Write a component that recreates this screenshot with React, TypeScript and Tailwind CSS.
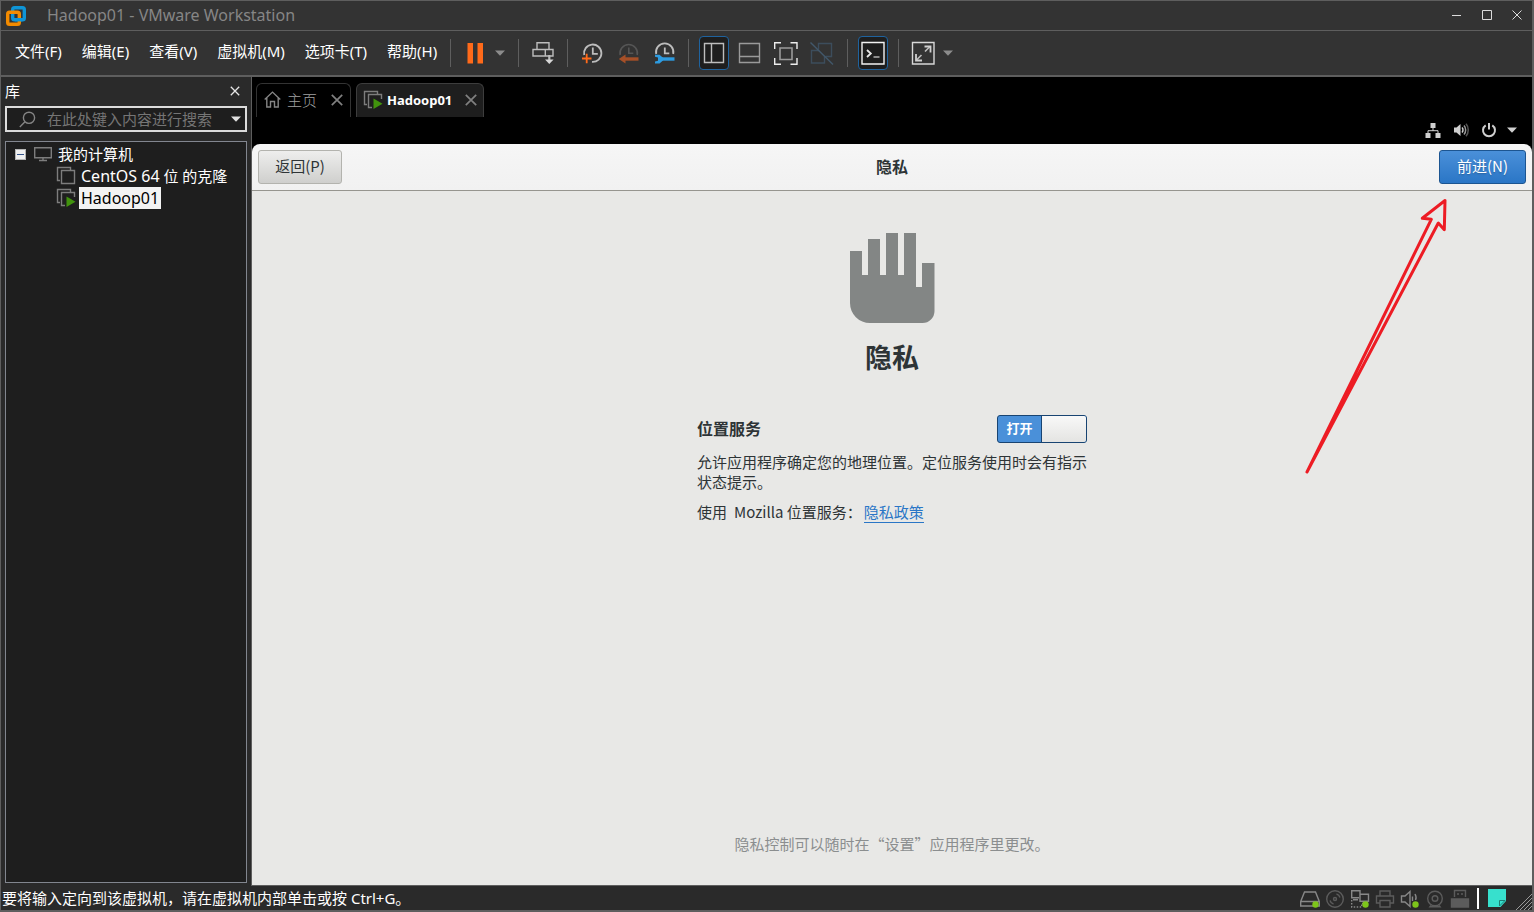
import { useState } from 'react';
import type { ReactNode } from 'react';

const menus = ['文件(F)', '编辑(E)', '查看(V)', '虚拟机(M)', '选项卡(T)', '帮助(H)'];

const uiFont = "font-['Noto_Sans','Noto_Sans_CJK_SC',sans-serif]";
const guestFont = "font-['Noto_Sans_CJK_SC',sans-serif]";

function Icon({ children, size = 24 }: { children: ReactNode; size?: number }) {
  return (
    <svg width={size} height={size} viewBox={`0 0 ${size} ${size}`} fill="none" stroke="#bdbdbd" strokeWidth="1.4" className="shrink-0" aria-hidden="true">
      {children}
    </svg>
  );
}

function Caret({ color = '#8c8c8c' }: { color?: string }) {
  return (
    <svg width="12" height="12" viewBox="0 0 12 12" className="shrink-0" aria-hidden="true">
      <path d="M1 3.5h10L6 8.8z" fill={color} />
    </svg>
  );
}

function Separator() {
  return <div className="h-7 w-px shrink-0 bg-[#5e5e5e]" />;
}

function ToolButton({ label, active, disabled, children }: { label: string; active?: boolean; disabled?: boolean; children: ReactNode }) {
  return (
    <button
      aria-label={label}
      disabled={disabled}
      className={
        active
          ? 'flex h-[34px] w-[30px] items-center justify-center rounded-sm border border-[#1f639f] bg-[#1e1e1e]'
          : 'flex h-[34px] w-[30px] items-center justify-center'
      }
    >
      {children}
    </button>
  );
}

function Logo() {
  return (
    <svg width="20" height="20" viewBox="0 0 20 20" fill="none" strokeWidth="3.4" aria-hidden="true">
      <rect x="6.7" y="1.7" width="11.6" height="12" rx="1.8" stroke="#0f95d7" />
      <rect x="1.7" y="6.3" width="11.6" height="12" rx="1.8" stroke="#f38b00" />
      <path d="M9 13.7h7.3" stroke="#0f95d7" />
    </svg>
  );
}

function TitleBar() {
  return (
    <header className="flex h-[30px] shrink-0 items-center border-b border-[#5e5e5e] bg-[#333] pl-[5px]">
      <Logo />
      <h1 className="ml-[21px] flex-1 pb-[2px] text-base leading-none text-[#868686]">Hadoop01 - VMware Workstation</h1>
      <div className="flex pb-[2px]">
        <button aria-label="最小化" className="flex h-7 w-[30px] items-center justify-center">
          <svg width="10" height="10" stroke="#dcdcdc"><path d="M0 5.5h9" /></svg>
        </button>
        <button aria-label="最大化" className="flex h-7 w-[30px] items-center justify-center">
          <svg width="10" height="10" stroke="#dcdcdc" fill="none"><path d="M.5.5h9v9h-9z" /></svg>
        </button>
        <button aria-label="关闭" className="flex h-7 w-[30px] items-center justify-center">
          <svg width="10" height="10" stroke="#dcdcdc"><path d="M.5.5l9 9M9.5.5l-9 9" /></svg>
        </button>
      </div>
    </header>
  );
}

function MenuBar() {
  return (
    <div className="flex h-[46px] shrink-0 items-center border-b-2 border-[#5e5e5e] bg-[#333]">
      <nav className="mr-[13px] ml-[14px] flex gap-5 pb-1">
        {menus.map((m) => (
          <button key={m} className="text-[15px] leading-5 whitespace-nowrap text-white">
            {m}
          </button>
        ))}
      </nav>
      <Separator />
      <div className="flex items-center gap-[7px] px-3">
        <button aria-label="挂起">
          <Icon>
            <path d="M4.5 2h5.500v20.500H4.500zM14.500 2H20v20.500h-5.500z" fill="#ff6a1a" stroke="none" />
          </Icon>
        </button>
        <button aria-label="电源选项"><Caret /></button>
      </div>
      <Separator />
      <div className="flex items-center px-3">
        <button aria-label="发送 Ctrl+Alt+Del">
          <Icon>
            <path d="M6 1.700h12v6.800H6zM2 8.500h20V15H2zM14.300 8.500V15" />
            <path d="M18.300 14v6" strokeWidth="2.200" />
            <path d="M14 18.500h8.600l-4.300 4.500z" fill="#d8d8d8" stroke="none" />
          </Icon>
        </button>
      </div>
      <Separator />
      <div className="flex items-center gap-3 px-3">
        <button aria-label="拍摄快照">
          <Icon>
            <path d="M4.200 14A8.700 8.700 0 1 1 12 20.900" strokeWidth="1.800" />
            <path d="M12.800 6.500v6.300h5" strokeWidth="1.800" />
            <path d="M2 17.500h9.500M6.700 12.800v9.500" stroke="#ff6a1a" strokeWidth="1.800" />
          </Icon>
        </button>
        <button aria-label="恢复快照" disabled>
          <Icon>
            <path d="M4.200 14a8.700 8.700 0 1 1 17 0M12.800 6.500v5.800h4.500" stroke="#555" strokeWidth="1.600" />
            <path d="M9 18h13.500" stroke="#a54f27" strokeWidth="3.400" />
            <path d="M2.800 18l6.700-4.500v9z" fill="#a54f27" stroke="none" />
          </Icon>
        </button>
        <button aria-label="管理快照">
          <Icon>
            <path d="M4.200 13a8.700 8.700 0 1 1 17 0M12.800 6.500v5.800h4.500" strokeWidth="1.800" />
            <path d="M9 18h13.500" stroke="#2d9be0" strokeWidth="3.400" />
            <path d="M3 13.800h4.500l3.500 3v2.800l-3.500 3H3v-2l3-.8v-3.200l-3-.8z" fill="#2d9be0" stroke="none" />
          </Icon>
        </button>
      </div>
      <Separator />
      <div className="flex items-center gap-[6px] px-[10px]">
        <ToolButton label="显示库" active>
          <Icon><path d="M2.500 2.500h19v19h-19zM9.500 2.500v19" /></Icon>
        </ToolButton>
        <ToolButton label="显示缩略图">
          <Icon><path d="M1.500 2.500h20v19h-20zM1.500 15.500h20" stroke="#9a9a9a" /></Icon>
        </ToolButton>
        <ToolButton label="全屏">
          <Icon>
            <path d="M.700 8V1.700H7M16.500 1.700H23V8M23 17v6.300h-6.500M7 23.300H.700V17" stroke="#ededed" />
            <path d="M6 7h12v11.500H6z" stroke="#9a9a9a" strokeWidth="1.600" />
          </Icon>
        </ToolButton>
        <ToolButton label="Unity" disabled>
          <Icon>
            <path d="M8.500 8.500v-6h13v13h-6M14.500 15v7h-13V9.500H9" stroke="#3c4d5c" />
            <path d="M.500 1.500l22.500 22" stroke="#42586b" />
          </Icon>
        </ToolButton>
      </div>
      <Separator />
      <div className="flex items-center px-[10px]">
        <ToolButton label="控制台视图" active>
          <Icon>
            <path d="M1 1.500h22v21.500H1z" stroke="#f2f2f2" />
            <path d="M6 9l3.800 3.500L6 16" stroke="#e8e8e8" strokeWidth="1.800" />
            <path d="M12.500 16h6" stroke="#bdbdbd" />
          </Icon>
        </ToolButton>
      </div>
      <Separator />
      <div className="flex items-center gap-[7px] px-3">
        <button aria-label="拉伸客户机">
          <Icon>
            <path d="M1.500 1.500h21.500v21.500H1.500z" stroke="#d8d8d8" />
            <path d="M5.500 19l5-5M14 10.500l5-5" strokeWidth="1.600" />
            <path d="M13.500 5.500h6v6M5 13v6.500h6" stroke="#d0d0d0" strokeWidth="1.800" />
          </Icon>
        </button>
        <button aria-label="拉伸选项"><Caret /></button>
      </div>
    </div>
  );
}

function VmIcon({ running }: { running?: boolean }) {
  return (
    <svg width="20" height="20" viewBox="0 0 20 20" fill="none" stroke="#7d7d7d" strokeWidth="1.4" className="shrink-0" aria-hidden="true">
      {running ? (
        <>
          <path d="M4 14.500H1.500V1.500h13V4M9 17.500H5.500v-13h13V9" />
          <path d="M10.500 8.500v10.500l9-5.200z" fill="#41930d" stroke="none" />
        </>
      ) : (
        <path d="M4 14.500H1.500V1.500h13V4M5.500 4.500h13v13h-13z" />
      )}
    </svg>
  );
}

function Sidebar() {
  return (
    <aside className="flex w-[251px] shrink-0 flex-col border-r border-[#5e5e5e] bg-[#2a2a2a] px-1 pb-[3px]">
      <div className="flex h-[29px] shrink-0 items-center justify-between pr-[2px] pb-[2px]">
        <h2 className="text-[15px] leading-5 text-white">库</h2>
        <button aria-label="关闭库" className="flex h-5 w-5 items-center justify-center">
          <svg width="10" height="10" stroke="#e6e6e6" strokeWidth="1.300"><path d="M.800.800l8.400 8.400M9.200.800L.800 9.200" /></svg>
        </button>
      </div>
      <div className="flex h-[26px] shrink-0 items-center border-2 border-[#dcdcdc] bg-[#1e1e1e] pr-[3px] pl-3">
        <svg width="17" height="17" viewBox="0 0 17 17" fill="none" stroke="#858585" strokeWidth="1.4" aria-hidden="true">
          <circle cx="10" cy="6.800" r="5.600" />
          <path d="M6 10.800L.800 16" />
        </svg>
        <input
          type="text"
          aria-label="搜索"
          placeholder="在此处键入内容进行搜索"
          className="ml-[11px] min-w-0 flex-1 bg-transparent text-[15px] leading-5 text-white outline-none placeholder:text-[#757575]"
        />
        <button aria-label="搜索选项"><Caret color="#e0e0e0" /></button>
      </div>
      <ul className="mt-[9px] flex-1 border border-[#82868f] bg-[#1e1e1e] pt-px text-[15px] leading-[22px] text-white">
        <li>
          <div className="flex h-[22px] items-center pl-[9px]">
            <button aria-label="折叠" className="flex h-[11px] w-[11px] items-center justify-center border border-[#b5b5b5] bg-[#f0f0f0]">
              <span className="h-px w-[7px] bg-[#33538a]" />
            </button>
            <svg width="18" height="16" viewBox="0 0 18 16" fill="none" stroke="#7d7d7d" strokeWidth="1.400" className="ml-2" aria-hidden="true">
              <path d="M.700 1.700h16.600v10H.700zM9 12v2.500M5 14.500h8" />
            </svg>
            <span className="ml-[6px]">我的计算机</span>
          </div>
          <ul>
            <li className="flex h-[22px] items-center pl-[50px]">
              <VmIcon />
              <span className="ml-[5px] whitespace-nowrap"><span className="text-base leading-[22px]">CentOS 64</span> 位 的克隆</span>
            </li>
            <li className="flex h-[22px] items-center pl-[50px]">
              <VmIcon running />
              <span className="ml-[3px] bg-[#f3f3f3] px-[2px] text-base leading-[22px] text-black">Hadoop01</span>
            </li>
          </ul>
        </li>
      </ul>
    </aside>
  );
}

function CloseTab() {
  return (
    <button aria-label="关闭标签页">
      <svg width="12" height="12" stroke="#808080" strokeWidth="1.700"><path d="M.800.800l10.400 10.400M11.200.800L.800 11.200" /></svg>
    </button>
  );
}

function Tabs() {
  return (
    <div className="flex shrink-0 gap-[5px] pt-[6px] pl-1">
      <div className="flex h-[34px] items-center rounded-t-md border border-b-0 border-[#333] px-[7px] pb-[2px]">
        <svg width="17" height="17" viewBox="0 0 17 17" fill="none" stroke="#858585" strokeWidth="1.400" aria-hidden="true">
          <path d="M.700 8.500l7.800-7.400 7.800 7.400M2.800 7v9h3.700v-5.500h4V16h3.700V7" />
        </svg>
        <button className="mr-[14px] ml-[6px] text-[15px] leading-5 font-light text-[#a0a0a0]">主页</button>
        <CloseTab />
      </div>
      <div className="flex h-[34px] items-center rounded-t-md border border-b-0 border-[#3d3d3d] bg-[#1e1e1e] px-[6px] pb-[2px]">
        <VmIcon running />
        <button className="mr-[13px] ml-1 text-[13px] leading-5 font-bold text-white">Hadoop01</button>
        <CloseTab />
      </div>
    </div>
  );
}

function GuestTray() {
  return (
    <div className="flex h-[27px] shrink-0 items-center justify-end gap-3 pr-[14px] pb-[2px]">
      <svg width="16" height="16" viewBox="0 0 16 16" fill="#d0d0d0" aria-hidden="true">
        <path d="M5.500 1h5v5h-5zM.500 11h5v5h-5zM10.500 11h5v5h-5z" />
        <path d="M8 6v3M3 11V8.700h10V11" fill="none" stroke="#d0d0d0" />
      </svg>
      <svg width="16" height="16" viewBox="0 0 16 16" fill="none" strokeWidth="1.500" aria-hidden="true">
        <path d="M1 5.500h2.500L7.500 2v12l-4-3.500H1z" fill="#d0d0d0" />
        <path d="M9 5.500c1.300 1.300 1.300 3.700 0 5" stroke="#d0d0d0" />
        <path d="M11 3.500c2.200 2.500 2.200 6.500 0 9" stroke="#999" />
        <path d="M13 1.800c3 3.400 3 9 0 12.400" stroke="#555" />
      </svg>
      <div className="flex items-center gap-[9px]">
        <svg width="16" height="16" viewBox="0 0 16 16" fill="none" stroke="#d0d0d0" strokeWidth="2" aria-hidden="true">
          <path d="M4.700 3.300a6 6 0 1 0 6.600 0M8 1v6.500" />
        </svg>
        <Caret color="#d0d0d0" />
      </div>
    </div>
  );
}

function Hand() {
  return (
    <svg width="85" height="90" viewBox="0 0 85 90" aria-hidden="true">
      <path
        d="M0 18h12v24h6V6h12v36h6V0h12v42h6V0h12v54h6V30h12.500v48a12 12 0 0 1-12 12H20A20 20 0 0 1 0 70z"
        fill="#838685"
      />
    </svg>
  );
}

function Guest() {
  const [location, setLocation] = useState(true);

  return (
    <main className={`flex min-h-0 flex-1 flex-col text-[15px] text-[#2e3436] ${guestFont}`}>
      <GuestTray />
      <div className="grid h-[47px] shrink-0 grid-cols-3 items-center rounded-t-lg border-b border-[#96958f] bg-gradient-to-b from-[#f6f6f6] to-[#f1f1f1] px-[6px]">
        <button className="h-[34px] w-[84px] justify-self-start rounded-[3px] border border-[#b3b3ae] bg-gradient-to-b from-[#eeeeed] to-[#cfcfcd] pb-[2px]">
          返回(P)
        </button>
        <h2 className="pb-[2px] text-center text-base leading-5 font-bold">隐私</h2>
        <button className="h-[34px] w-[87px] justify-self-end rounded-[3px] border border-[#1c5591] bg-gradient-to-b from-[#4a90d9] to-[#2a76c6] pb-[2px] text-white text-shadow-sm">
          前进(N)
        </button>
      </div>
      <div className="relative flex flex-1 flex-col items-center bg-[#e8e8e6] pt-[42px] pb-[31px]">
        <Hand />
        <h3 className="mt-[14px] text-[27px] leading-10 font-bold">隐私</h3>
        <div className="mt-[38px] w-[390px]">
          <div className="flex h-7 items-center justify-between">
            <span id="location-label" className="pb-[2px] text-base leading-5 font-bold">位置服务</span>
            <label className="relative flex h-7 w-[90px] overflow-hidden rounded-[3px] border border-[#184472] bg-[#4a90d9]">
              <input
                type="checkbox"
                role="switch"
                aria-labelledby="location-label"
                checked={location}
                onChange={(e) => setLocation(e.target.checked)}
                className="absolute inset-0 appearance-none"
              />
              <span className="flex-1 text-center text-[13px] leading-6 font-bold text-white">打开</span>
              <span className="w-[45px] border-l border-[#184472] bg-gradient-to-b from-[#f8f8f8] to-[#e4e4e2]" />
            </label>
          </div>
          <p className="mt-[9px] leading-5">允许应用程序确定您的地理位置。定位服务使用时会有指示状态提示。</p>
          <p className="mt-[10px] flex leading-5 whitespace-nowrap">
            <span>使用</span>
            <span className="ml-[7px]">Mozilla 位置服务：</span>
            <a href="#privacy" className="ml-[2px] border-b border-[#2a76c6] text-[#2a76c6]">隐私政策</a>
          </p>
        </div>
        <p className="mt-auto leading-5 text-[#8b8e8f]">隐私控制可以随时在“设置”应用程序里更改。</p>
        <svg width="144" height="278" viewBox="0 0 144 278" className="pointer-events-none absolute top-[7px] right-[84px]" aria-hidden="true">
          <path
            d="M3 274L127.300 21.300l-9-1L141 2.500l-.700 29.200-6-6.700z"
            fill="none"
            stroke="#ed1c24"
            strokeWidth="3"
            strokeLinejoin="round"
          />
        </svg>
      </div>
    </main>
  );
}

function StatusIcon({ label, connected, children }: { label: string; connected?: boolean; children: ReactNode }) {
  return (
    <button aria-label={label}>
      <svg width="20" height="20" viewBox="0 0 20 20" fill="none" stroke={connected ? '#888' : '#5c5c5c'} strokeWidth="1.400">
        {children}
        {connected && <circle cx="15.500" cy="15.500" r="3.200" fill="#7ec51b" stroke="none" />}
      </svg>
    </button>
  );
}

function StatusBar() {
  return (
    <footer className="flex h-6 shrink-0 items-center bg-[#2a2a2a]">
      <p className="flex-1 pl-px text-[15px] leading-5 text-white">要将输入定向到该虚拟机，请在虚拟机内部单击或按 Ctrl+G。</p>
      <div className="flex items-center gap-[5px] pt-[2px]">
        <StatusIcon label="硬盘" connected>
          <path d="M.700 12.500L4.500 3h11l3.800 9.500v4.500H.700zM.700 12.500h18.600" />
        </StatusIcon>
        <StatusIcon label="CD/DVD">
          <circle cx="10" cy="10" r="8.300" />
          <circle cx="10" cy="10" r="1.500" />
          <path d="M11.500 5c1.800.500 3 1.700 3.500 3.500M8.500 15c-1.800-.500-3-1.700-3.500-3.500" />
        </StatusIcon>
        <StatusIcon label="网络适配器" connected>
          <path d="M10 5V1.700H1.700v7H9M3 10.700h5M10 5.200h8.500v7H10zM12 14.500h5" />
          <path d="M1.700 11v7h10v-4" strokeDasharray="1.500 1.500" />
        </StatusIcon>
        <StatusIcon label="打印机">
          <path d="M5 7V2h10v5M5 14H1.500V7h17v7H15M5 11.500h10V18H5z" />
        </StatusIcon>
        <StatusIcon label="声卡" connected>
          <path d="M1.500 7h3.500l5-4.500v15L5 13H1.500zM12.500 7.500v4.500M15 5c1.300 2.300 1.300 4.500.500 6" />
        </StatusIcon>
        <StatusIcon label="摄像头">
          <circle cx="10" cy="9.500" r="7.300" />
          <circle cx="10" cy="9.500" r="2.800" />
          <path d="M6 16.500l-1 1.200h10l-1-1.200" />
        </StatusIcon>
        <StatusIcon label="USB">
          <path d="M4.500 8V1.500h11V8" />
          <path d="M1.500 10h17v8h-17z" fill="#5c5c5c" />
          <path d="M7 5h2M11 5h2" />
        </StatusIcon>
      </div>
      <div className="ml-[7px] h-[21px] w-[2px] bg-white" />
      <button aria-label="消息日志" className="ml-[9px]">
        <svg width="18" height="18" viewBox="0 0 18 18">
          <path d="M0 0h18v12l-5.500 6H0z" fill="#37e0cd" />
          <path d="M17 11.500h-5.500v5.500z" fill="#37e0cd" stroke="#1c7f75" />
        </svg>
      </button>
      <svg width="16" height="16" viewBox="0 0 16 16" className="ml-[10px] self-end" stroke="#9a9a9a" aria-hidden="true">
        <path d="M0 16L16 0M4 16L16 4M8 16l8-8M12 16l4-4" />
      </svg>
    </footer>
  );
}

export default function App() {
  return (
    <div lang="zh-CN" className={`flex h-screen flex-col overflow-hidden border-t border-r-2 border-b-2 border-l border-[#5e5e5e] bg-[#2a2a2a] ${uiFont}`}>
      <TitleBar />
      <MenuBar />
      <div className="flex min-h-0 flex-1">
        <Sidebar />
        <div className="flex min-w-0 flex-1 flex-col border-b border-[#5e5e5e] bg-black">
          <Tabs />
          <Guest />
        </div>
      </div>
      <StatusBar />
    </div>
  );
}
